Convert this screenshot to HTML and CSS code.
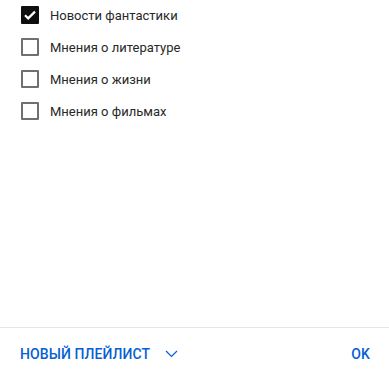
FILE: index.html
```html
<!DOCTYPE html>
<html lang="ru">
<head>
    <meta charset="UTF-8">
    <title>Сохранить в плейлист</title>
    <link rel="stylesheet" href="styles.css">
</head>
<body>
    <div class="dialog">
        <div class="playlists">
            <label class="item">
                <span class="box checked">
                    <svg viewBox="0 0 18 18" width="18" height="18"><path d="M4 9.2l3.2 3.2L14 5.6" fill="none" stroke="#fff" stroke-width="2.2"/></svg>
                </span>
                <span class="name">Новости фантастики</span>
            </label>
            <label class="item">
                <span class="box"></span>
                <span class="name">Мнения о литературе</span>
            </label>
            <label class="item">
                <span class="box"></span>
                <span class="name">Мнения о жизни</span>
            </label>
            <label class="item">
                <span class="box"></span>
                <span class="name">Мнения о фильмах</span>
            </label>
        </div>
        <div class="footer">
            <button class="link new-list">
                НОВЫЙ ПЛЕЙЛИСТ
                <svg viewBox="0 0 13 8" width="13" height="8"><path d="M1 1l5.5 5.5L12 1" fill="none" stroke="#065fd4" stroke-width="1.2"/></svg>
            </button>
            <button class="link">OK</button>
        </div>
    </div>
</body>
</html>
```

FILE: styles.css
```css
body {
    margin: 0;
    font-family: Roboto, "Noto Sans", sans-serif;
    background-color: #ffffff;
}

.dialog {
    width: 389px;
    height: 371px;
    display: flex;
    flex-direction: column;
}

.playlists {
    flex: 1;
    margin-top: -1px;
}

.item {
    display: flex;
    align-items: center;
    height: 32px;
    padding-left: 21px;
}

.box {
    width: 18px;
    height: 18px;
    box-sizing: border-box;
    border: 2px solid #707070;
    border-radius: 1px;
    display: flex;
    align-items: center;
    justify-content: center;
}

.box.checked {
    background-color: #0f0f0f;
    border-color: #0f0f0f;
}

.box svg {
    flex: none;
}

.name {
    margin-left: 11px;
    font-size: 13px;
    color: #282828;
}

.footer {
    border-top: 1px solid #e5e5e5;
    height: 43px;
    display: flex;
    align-items: center;
    justify-content: space-between;
    padding: 8px 19px 0 20px;
    box-sizing: border-box;
    height: 44px;
}

.link {
    background: none;
    border: none;
    padding: 0;
    font-family: Roboto, "Noto Sans", sans-serif;
    font-size: 14px;
    font-weight: 500;
    letter-spacing: 0.1px;
    color: #065fd4;
    display: flex;
    align-items: center;
    cursor: pointer;
}

.new-list svg {
    margin-left: 15px;
}
```
